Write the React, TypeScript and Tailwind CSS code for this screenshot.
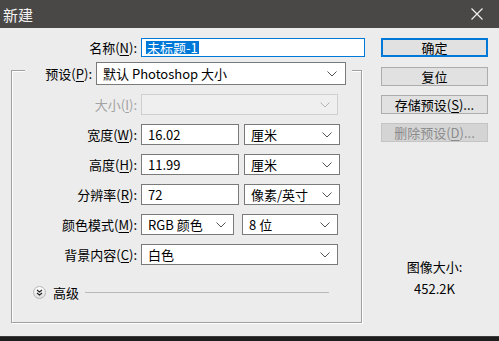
import React from 'react';

const font = { fontFamily: '"Noto Sans CJK SC", "Noto Sans", sans-serif' };

// underlined accelerator key, e.g. 名称(N):
const Acc = ({ k }: { k: string }) => (
  <>
    (<span className="underline underline-offset-2">{k}</span>)
  </>
);

const Chevron = ({ color = '#444' }: { color?: string }) => (
  <svg width="10" height="6" viewBox="0 0 10 6" className="shrink-0">
    <path d="M0.5 0.5 L5 5 L9.5 0.5" fill="none" stroke={color} strokeWidth="1" />
  </svg>
);

const Select = ({ value, w, disabled }: { value: string; w: string; disabled?: boolean }) => (
  <div
    className={`${w} h-[21px] flex items-center justify-between pl-[6px] pr-[7px] border ${
      disabled ? 'bg-[#efefef] border-[#cfcfcf]' : 'bg-white border-[#7a7a7a]'
    }`}
  >
    <span className="text-[13px] leading-none text-black">{value}</span>
    <Chevron color={disabled ? '#b5b5b5' : '#555'} />
  </div>
);

const Input = ({ value, w }: { value: string; w: string }) => (
  <div className={`${w} h-[21px] flex items-center pl-[6px] bg-white border border-[#7a7a7a]`}>
    <span className="text-[13px] leading-none text-black">{value}</span>
  </div>
);

const Row = ({ label, children, muted }: { label: React.ReactNode; children: React.ReactNode; muted?: boolean }) => (
  <div className="flex items-center h-[21px] gap-[4px]">
    <div className={`w-[125px] text-right text-[13px] leading-none ${muted ? 'text-[#a3a3a3]' : 'text-black'}`}>{label}</div>
    {children}
  </div>
);

const Button = ({ children, primary, disabled, mt }: { children: React.ReactNode; primary?: boolean; disabled?: boolean; mt: string }) => (
  <div
    className={`${mt} h-[19px] w-[107px] flex items-center justify-center text-[13px] leading-none ${
      primary
        ? 'border-2 border-[#0078d7] bg-[#e1e1e1] text-black'
        : disabled
        ? 'border border-[#c4c4c4] bg-[#d4d4d4] text-[#8c8c8c]'
        : 'border border-[#adadad] bg-[#e1e1e1] text-black'
    }`}
  >
    {children}
  </div>
);

export default function App() {
  return (
    <div className="w-[499px] h-[341px] overflow-hidden flex flex-col bg-[#ececec] select-none" style={font}>
      {/* title bar */}
      <div className="h-[28px] shrink-0 bg-[#4a4846] flex items-center justify-between pl-[3px] pr-[16px]">
        <span className="text-[15px] text-[#f2f2f2] leading-none">新建</span>
        <svg width="12" height="12" viewBox="0 0 12 12">
          <path d="M0.5 0.5 L11.5 11.5 M11.5 0.5 L0.5 11.5" stroke="#f0f0f0" strokeWidth="1.2" />
        </svg>
      </div>

      {/* body */}
      <div className="flex-1 flex pl-[11px]">
        <div className="w-[354px] flex flex-col">
          <div className="mt-[10px] flex items-center h-[19px] gap-[4px]">
            <div className="w-[126px] text-right text-[13px] leading-none text-black">
              名称<Acc k="N" />:
            </div>
            <div className="w-[224px] h-[19px] flex items-center pl-[4px] bg-white border border-[#0078d7]">
              <span className="bg-[#0078d7] text-white text-[13px] leading-[13px] px-[1px]">未标题-1</span>
            </div>
          </div>

          {/* group box */}
          <div className="mt-[13px] w-[351px] h-[253px] border border-[#a0a0a0] shadow-[1px_1px_0_#ffffff,inset_1px_1px_0_#ffffff] flex flex-col">
            <div className="-mt-[9px] ml-[13px] w-[327px] h-[23px] bg-[#ececec] flex items-center gap-[4px]">
              <div className="w-[67px] text-right text-[13px] leading-none text-black">
                预设<Acc k="P" />:
              </div>
              <div className="w-[250px] h-[23px] flex items-center justify-between pl-[6px] pr-[8px] bg-white border border-[#7a7a7a]">
                <span className="text-[13px] leading-none text-black">默认 Photoshop 大小</span>
                <Chevron color="#555" />
              </div>
            </div>

            <div className="mt-[9px] flex flex-col gap-[9px]">
              <Row
                muted
                label={
                  <>
                    大小<Acc k="I" />:
                  </>
                }
              >
                <Select value="" w="w-[197px]" disabled />
              </Row>
              <Row
                label={
                  <>
                    宽度<Acc k="W" />:
                  </>
                }
              >
                <Input value="16.02" w="w-[98px]" />
                <Select value="厘米" w="w-[96px] ml-[1px]" />
              </Row>
              <Row
                label={
                  <>
                    高度<Acc k="H" />:
                  </>
                }
              >
                <Input value="11.99" w="w-[98px]" />
                <Select value="厘米" w="w-[96px] ml-[1px]" />
              </Row>
              <Row
                label={
                  <>
                    分辨率<Acc k="R" />:
                  </>
                }
              >
                <Input value="72" w="w-[98px]" />
                <Select value="像素/英寸" w="w-[96px] ml-[1px]" />
              </Row>
              <Row
                label={
                  <>
                    颜色模式<Acc k="M" />:
                  </>
                }
              >
                <Select value="RGB 颜色" w="w-[93px]" />
                <Select value="8 位" w="w-[96px] ml-[4px]" />
              </Row>
              <Row
                label={
                  <>
                    背景内容<Acc k="C" />:
                  </>
                }
              >
                <Select value="白色" w="w-[197px]" />
              </Row>
            </div>

            <div className="mt-[20px] pl-[21px] pr-[32px] h-[14px] flex items-center">
              <svg width="13" height="13" viewBox="0 0 13 13" className="shrink-0">
                <defs>
                  <linearGradient id="adv" x1="0" y1="0" x2="0" y2="1">
                    <stop offset="0" stopColor="#ffffff" />
                    <stop offset="1" stopColor="#dcdcdc" />
                  </linearGradient>
                </defs>
                <circle cx="6.5" cy="6.5" r="6" fill="url(#adv)" stroke="#b4b4b4" strokeWidth="1" />
                <path d="M4 4 L6.5 6 L9 4 M4 7 L6.5 9 L9 7" fill="none" stroke="#222" strokeWidth="1.1" />
              </svg>
              <span className="ml-[7px] text-[13px] leading-none text-black">高级</span>
              <div className="ml-[6px] flex-1 h-px bg-[#b9b9b9]" />
            </div>
          </div>
        </div>

        {/* right column */}
        <div className="ml-[16px] w-[107px] flex flex-col">
          <Button primary mt="mt-[10px]">确定</Button>
          <Button mt="mt-[10px]">复位</Button>
          <Button mt="mt-[9px]">
            存储预设<Acc k="S" />...
          </Button>
          <Button disabled mt="mt-[9px]">
            删除预设<Acc k="D" />...
          </Button>
          <div className="mt-[117px] text-center text-[13px] leading-[16px] text-black">图像大小:</div>
          <div className="mt-[6px] text-center text-[13px] leading-[16px] text-black">452.2K</div>
        </div>
      </div>

      {/* bottom strip */}
      <div className="h-[5px] shrink-0 bg-[#1e1e1e] border-t border-[#3c3c3c]" />
    </div>
  );
}
